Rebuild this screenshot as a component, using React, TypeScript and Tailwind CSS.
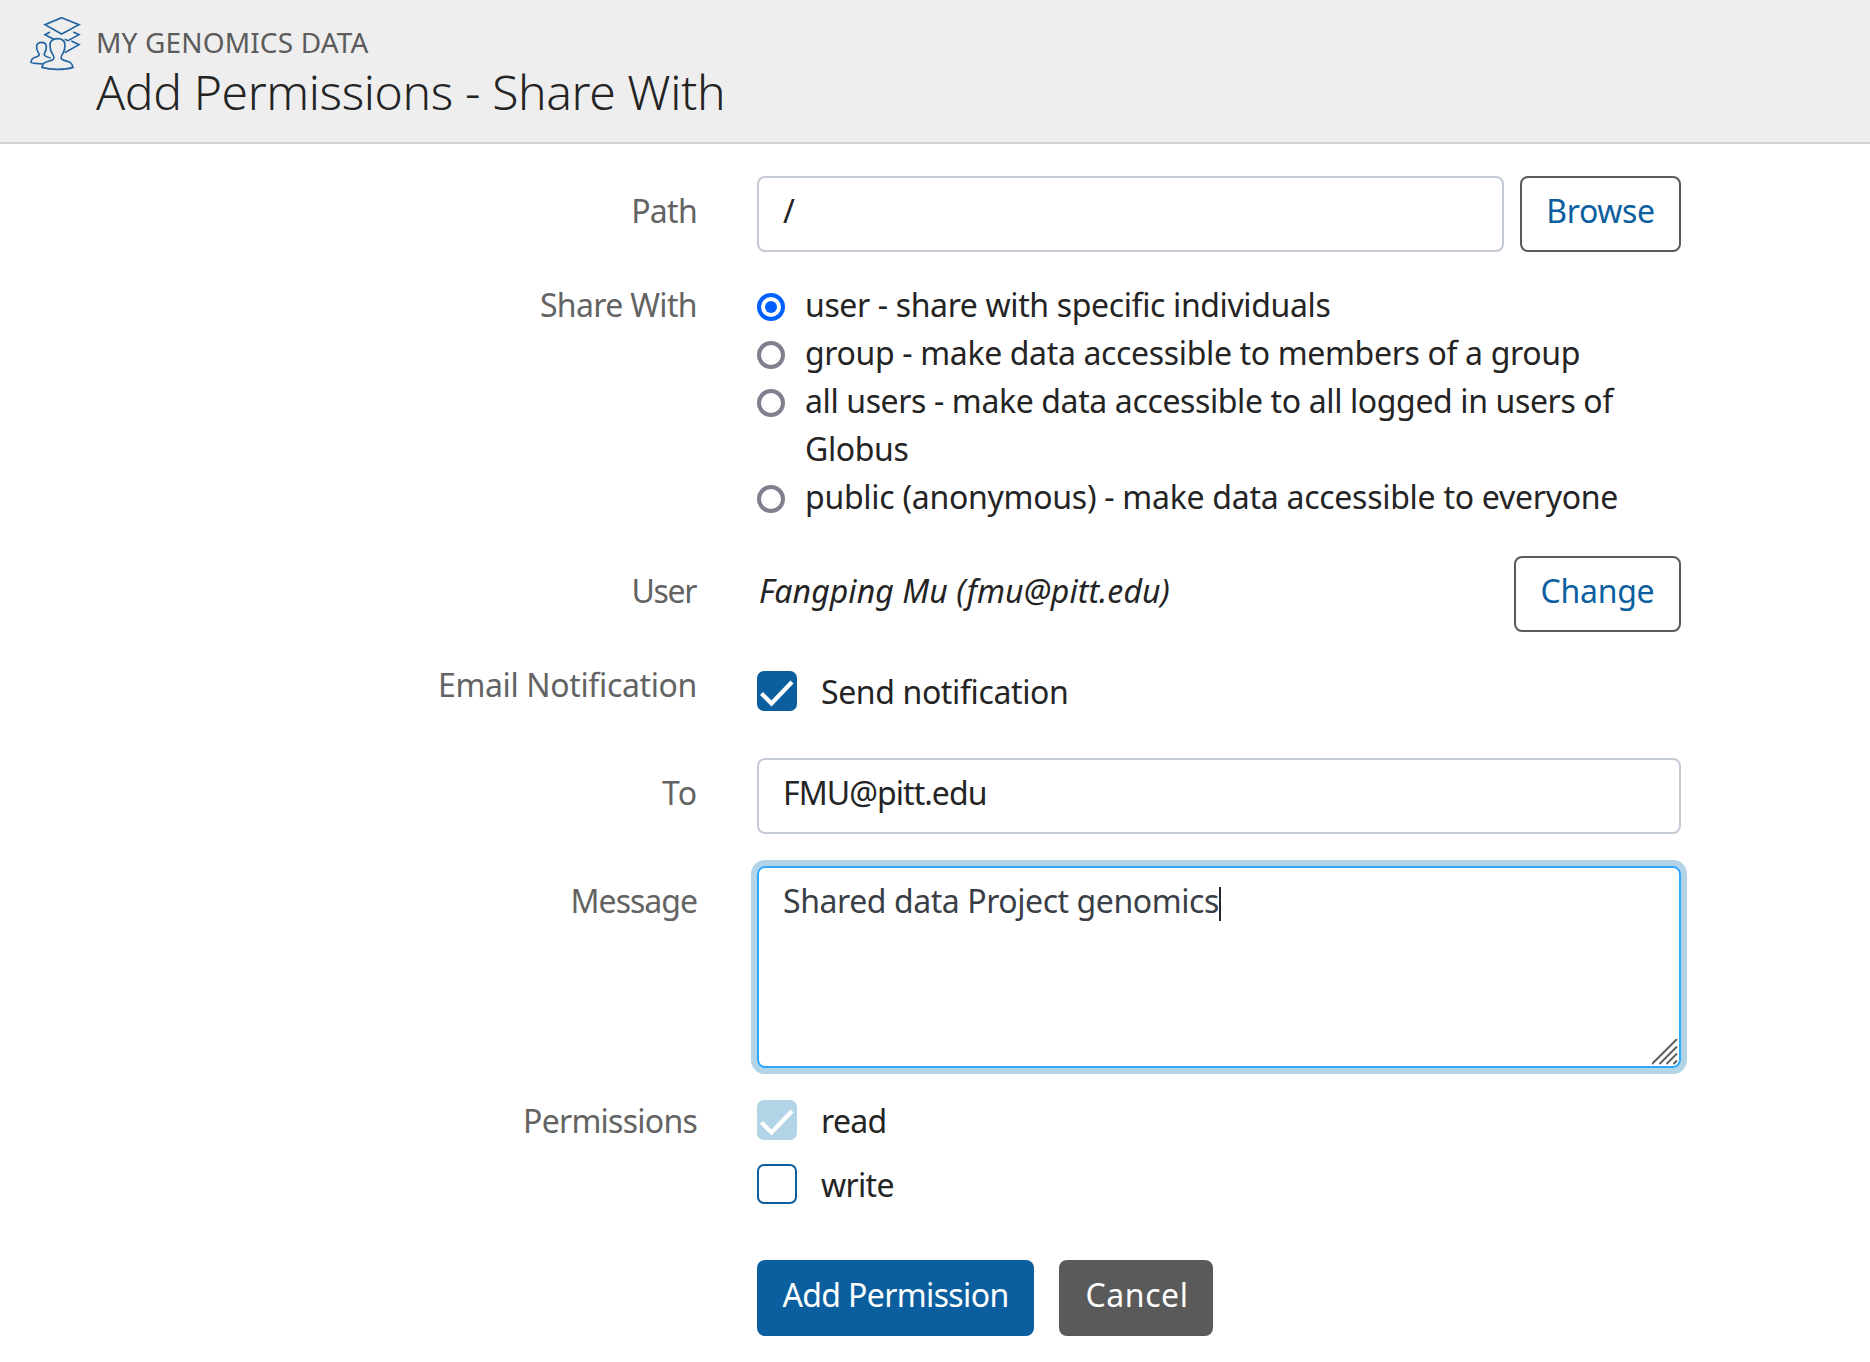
import type { ReactNode } from "react";

function ShareIcon() {
  return (
    <svg viewBox="0 0 210 210" className="h-[70px] w-[70px] shrink-0" fill="none" stroke="#2564a3" strokeWidth="5" strokeLinejoin="miter">
      <path d="M125 23 L177 44 L125 72 L75 44 Z" />
      <path d="M90 66 L75 74 L100 87" />
      <path d="M160 66 L177 74 L144 92 L134 88" />
      <path d="M154 93 L177 104 L134 128" />
      <path d="M112 86 C97 86 89 94 90 107 C90 117 93 124 96 130 C104 140 104 148 94 151 C72 158 69 158 66 172 C92 180 134 180 159 172 C156 158 152 157 132 151 C121 148 121 140 129 130 C133 123 135 115 135 106 C135 94 128 86 112 86 Z" />
      <path d="M70 162 L45 160 C40 160 36 159 33 157 C34 146 39 144 48 141 C59 138 60 134 55 128 C50 119 49 112 50 107 C52 100 57 97 64 97 C72 97 78 101 79 108 C80 116 77 124 74 129 C70 135 72 138 92 144" />
    </svg>
  );
}

function Check() {
  return (
    <svg viewBox="0 0 40 40" className="h-10 w-10" fill="none" stroke="#fff" strokeWidth="4.2">
      <path d="M4.5 22.5 L14.5 32.5 L35 11" />
    </svg>
  );
}

function Label({ children, className }: { children: ReactNode; className: string }) {
  return <div className={`w-[697px] shrink-0 text-right whitespace-nowrap text-[#636363] ${className}`}>{children}</div>;
}

function Radio({ checked, children, className }: { checked?: boolean; children: ReactNode; className: string }) {
  return (
    <div className="flex">
      <span
        className={
          checked
            ? "mt-[13px] flex h-7 w-7 shrink-0 items-center justify-center rounded-full border-4 border-[#0060ff]"
            : "mt-[13px] h-7 w-7 shrink-0 rounded-full border-4 border-[#7f7f8e]"
        }
      >
        {checked && <span className="h-3 w-3 rounded-full bg-[#0060ff]" />}
      </span>
      <div className={`mt-px -mb-px ml-5 whitespace-nowrap ${className}`}>{children}</div>
    </div>
  );
}

export default function App() {
  return (
    <div className="h-[1362px] w-[1870px] overflow-hidden bg-white font-['Noto_Sans',sans-serif] text-[32px] leading-[48px] text-[#242424]">
      <header className="flex h-36 border-b-2 border-[#d2d2d2] bg-[#eeeeee] pl-5">
        <div className="pt-[10px]">
          <ShareIcon />
        </div>
        <div className="ml-[6px] whitespace-nowrap">
          <div className="mt-[21px] text-[28px] leading-[42px] tracking-[0.15px] text-[#5c5c5c]">MY GENOMICS DATA</div>
          <div className="text-[48px] leading-[58px] font-light tracking-[-0.38px]">Add Permissions - Share With</div>
        </div>
      </header>

      <main className="pt-8">
        <div className="flex">
          <Label className="pt-[11px] tracking-[-0.7px]">Path</Label>
          <div className="ml-[60px] h-[76px] w-[747px] rounded-[8px] border-2 border-[#c4cad4] pt-[9px] pl-6">/</div>
          <div className="ml-4 h-[76px] w-[161px] rounded-[8px] border-2 border-[#5a5a5a] pt-[9px] text-center tracking-[-0.35px] text-[#0c5f9f]">
            Browse
          </div>
        </div>

        <div className="mt-7 flex">
          <Label className="pt-px tracking-[-0.65px]">Share With</Label>
          <div className="ml-[60px]">
            <Radio checked className="tracking-[-0.37px]">user - share with specific individuals</Radio>
            <Radio className="tracking-[-0.35px]">group - make data accessible to members of a group</Radio>
            <Radio className="tracking-[-0.38px]">
              all users - make data accessible to all logged in users of
              <br />
              Globus
            </Radio>
            <Radio className="tracking-[-0.27px]">public (anonymous) - make data accessible to everyone</Radio>
          </div>
        </div>

        <div className="mt-9 flex">
          <Label className="pt-[11px] pr-[1px] tracking-[-1.4px]">User</Label>
          <div className="ml-[60px] flex w-[924px] justify-between">
            <div className="pt-[11px] pl-[2px] tracking-[0.06px] italic">Fangping Mu (fmu@pitt.edu)</div>
            <div className="h-[76px] w-[167px] rounded-[8px] border-2 border-[#5a5a5a] pt-[9px] text-center tracking-[-0.28px] text-[#0c5f9f]">
              Change
            </div>
          </div>
        </div>

        <div className="mt-7 flex">
          <Label className="pt-px tracking-[-0.36px]">Email Notification</Label>
          <div className="mt-[11px] ml-[60px] h-10 w-10 rounded-[7px] bg-[#0c5f9f]">
            <Check />
          </div>
          <div className="mt-2 -mb-px ml-6 tracking-[-0.38px]">Send notification</div>
        </div>

        <div className="mt-[43px] flex">
          <Label className="pt-[11px]">To</Label>
          <div className="ml-[60px] h-[76px] w-[924px] rounded-[8px] border-2 border-[#c4cad4] pt-[9px] pl-6 tracking-[-0.95px]">
            FMU@pitt.edu
          </div>
        </div>

        <div className="mt-8 flex">
          <Label className="pt-[11px] tracking-[-1px]">Message</Label>
          <div className="ml-[60px] flex h-[202px] w-[924px] rounded-[8px] border-2 border-[#2ea8ff] pt-[9px] pl-6 text-[#3a3f47] ring-6 ring-[#b3d4e7]">
            <div className="tracking-[-0.43px]">Shared data Project genomics</div>
            <span className="mt-[10px] h-[34px] w-[2px] bg-[#24282e]" />
            <svg viewBox="0 0 26 26" className="mr-[1px] mb-[1px] ml-auto h-[26px] w-[26px] self-end" stroke="#5f5f5f" strokeWidth="2" fill="none">
              <path d="M0 25 L25 0 M7.5 25 L25 7.5 M14.5 25 L25 14.5 M21.5 25 L25 21.5" />
            </svg>
          </div>
        </div>

        <div className="mt-7 flex">
          <Label className="pt-px tracking-[-0.75px]">Permissions</Label>
          <div className="ml-[60px] flex flex-col gap-4">
            <div className="flex">
              <div className="mt-1 h-10 w-10 rounded-[7px] bg-[#b3d4e7]">
                <Check />
              </div>
              <div className="mt-px -mb-px ml-6 tracking-[-0.7px]">read</div>
            </div>
            <div className="flex">
              <div className="mt-1 h-10 w-10 rounded-[7px] border-2 border-[#0c5f9f]" />
              <div className="mt-px -mb-px ml-6 tracking-[-0.7px]">write</div>
            </div>
          </div>
        </div>

        <div className="mt-[52px] flex pl-[757px] text-white">
          <div className="h-[76px] w-[277px] rounded-[8px] bg-[#0c5f9f] pt-[11px] text-center tracking-[-0.63px]">Add Permission</div>
          <div className="ml-[25px] h-[76px] w-[154px] rounded-[8px] bg-[#5a5a5a] pt-[11px] pl-[2px] text-center tracking-[0.6px]">Cancel</div>
        </div>
      </main>
    </div>
  );
}
